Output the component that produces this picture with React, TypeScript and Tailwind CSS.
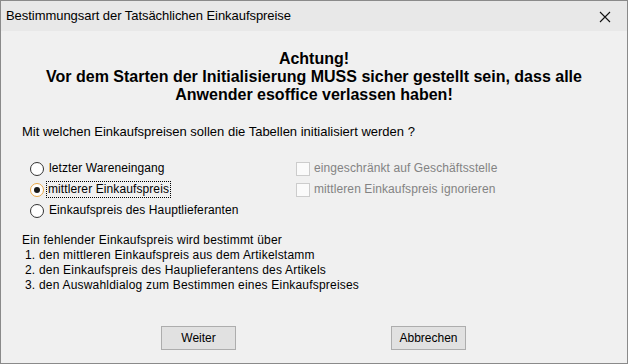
import React from "react";

const font = { fontFamily: '"Liberation Sans", Arial, sans-serif' };

function Radio({ checked, focus, label }: { checked?: boolean; focus?: boolean; label: string }) {
  return (
    <div className="flex items-center h-[21px]">
      <div
        className={`w-[14px] h-[14px] rounded-full bg-white border flex items-center justify-center ${
          focus ? "border-[#e8a84a]" : "border-[#333333]"
        }`}
      >
        {checked && <div className="w-[6px] h-[6px] rounded-full bg-[#1a1a1a]" />}
      </div>
      <span
        className={`ml-[3px] px-[1px] leading-[15px] text-[12px] tracking-[0.1px] text-[#000] ${
          focus ? "outline outline-1 outline-dotted outline-black" : "border border-transparent"
        }`}
      >
        {label}
      </span>
    </div>
  );
}

function Check({ label }: { label: string }) {
  return (
    <div className="flex items-center h-[21px]">
      <div className="w-[14px] h-[14px] bg-[#fafafa] border border-[#cccccc]" />
      <span className="ml-[4px] text-[12px] tracking-[0.1px] leading-[15px] text-[#838383]">{label}</span>
    </div>
  );
}

export default function App() {
  return (
    <div
      style={font}
      className="w-[628px] h-[364px] border border-[#8a8a8a] bg-[#f0f0f0] flex flex-col overflow-hidden"
    >
      <div className="h-[30px] bg-[#e8e8e8] flex items-center justify-between pl-[5px] pr-[16px] shrink-0">
        <span className="text-[13px] tracking-[-0.05px] text-black">Bestimmungsart der Tatsächlichen Einkaufspreise</span>
        <svg width="12" height="12" viewBox="0 0 12 12" className="mt-[1px]">
          <path d="M1 1 L11 11 M11 1 L1 11" stroke="#111" strokeWidth="1.1" />
        </svg>
      </div>
      <div className="flex-1 flex flex-col">
        <div className="mt-[19px] text-center font-bold text-[16px] leading-[18px] text-black">
          <div>Achtung!</div>
          <div>Vor dem Starten der Initialisierung MUSS sicher gestellt sein, dass alle</div>
          <div>Anwender esoffice verlassen haben!</div>
        </div>
        <div className="mt-[20px] ml-[21px] text-[13px] leading-[15px] text-black">
          Mit welchen Einkaufspreisen sollen die Tabellen initialisiert werden ?
        </div>
        <div className="mt-[19px] ml-[29px] flex">
          <div className="w-[266px] flex flex-col">
            <Radio label="letzter Wareneingang" />
            <Radio checked focus label="mittlerer Einkaufspreis" />
            <Radio label="Einkaufspreis des Hauptlieferanten" />
          </div>
          <div className="flex flex-col">
            <Check label="eingeschränkt auf Geschäftsstelle" />
            <Check label="mittleren Einkaufspreis ignorieren" />
          </div>
        </div>
        <div className="mt-[12px] ml-[21px] text-[12px] tracking-[0.2px] leading-[15px] text-black">
          <div>Ein fehlender Einkaufspreis wird bestimmt über</div>
          <div className="pl-[3px]">1. den mittleren Einkaufspreis aus dem Artikelstamm</div>
          <div className="pl-[3px]">2. den Einkaufspreis des Hauplieferantens des Artikels</div>
          <div className="pl-[3px]">3. den Auswahldialog zum Bestimmen eines Einkaufspreises</div>
        </div>
        <div className="mt-auto mb-[13px] flex">
          <button className="ml-[160px] w-[75px] h-[24px] bg-[#e1e1e1] border border-[#adadad] text-[12px] text-black">
            Weiter
          </button>
          <button className="ml-[155px] w-[75px] h-[24px] bg-[#e1e1e1] border border-[#adadad] text-[12px] text-black">
            Abbrechen
          </button>
        </div>
      </div>
    </div>
  );
}
